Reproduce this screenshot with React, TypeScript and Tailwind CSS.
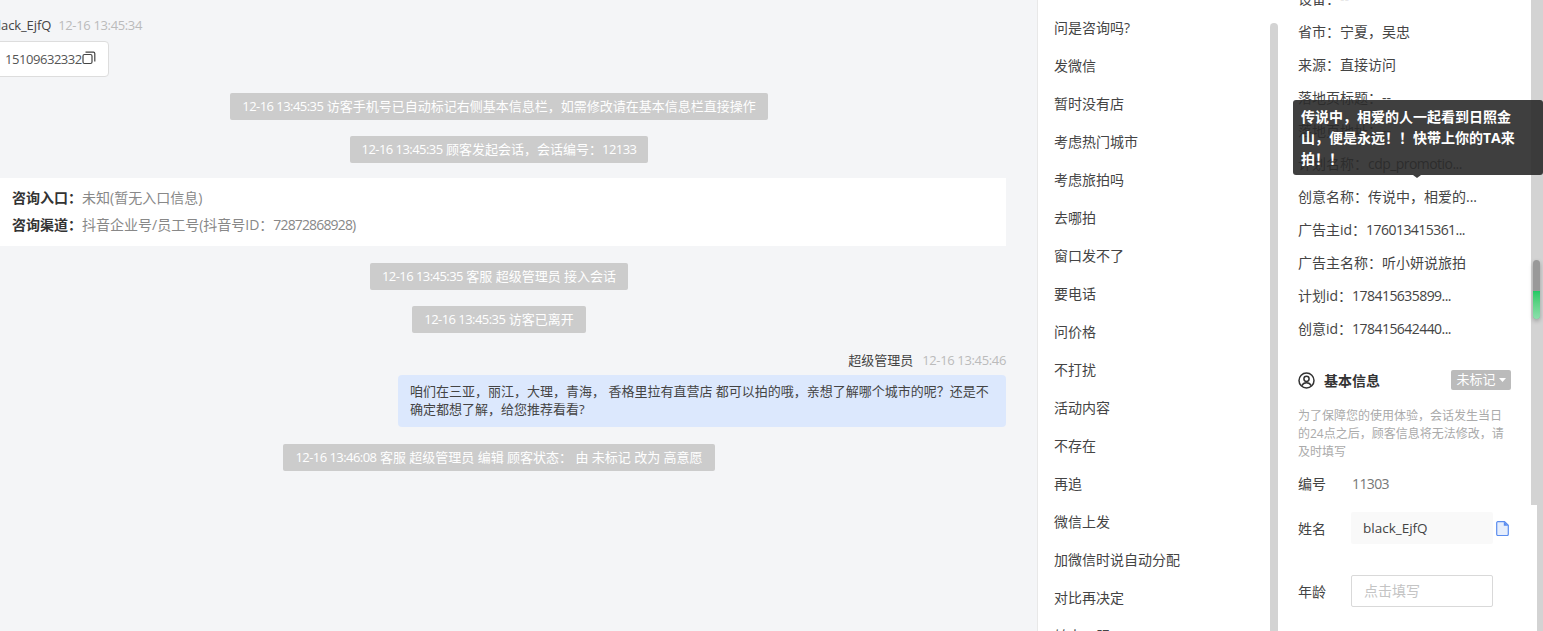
import React from "react";

const font = { fontFamily: '"Open Sans","Noto Sans CJK SC",sans-serif' };

function N({ children }: { children: React.ReactNode }) {
  return <span className="tracking-[-0.55px]">{children}</span>;
}

function Sys({ time, children, mt }: { time: string; children: React.ReactNode; mt: string }) {
  return (
    <div className={`flex justify-center pr-[8px] ${mt}`}>
      <div className="h-[27px] rounded-[2px] bg-[#cccccc] px-3 text-[13px] leading-[27px] text-white whitespace-nowrap">
        <N>{time}</N> {children}
      </div>
    </div>
  );
}

const replies = ["问是咨询吗?", "发微信", "暂时没有店", "考虑热门城市", "考虑旅拍吗", "去哪拍", "窗口发不了", "要电话", "问价格", "不打扰", "活动内容", "不存在", "再追", "微信上发", "加微信时说自动分配", "对比再决定", "转人工服"];

const infos: [string, string, boolean][] = [
  ["省市：", "宁夏，吴忠", false],
  ["来源：", "直接访问", false],
  ["落地页标题：", "--", false],
  ["落地页地址：", "--", false],
  ["计划名称：", "cdp_promotio...", true],
  ["创意名称：", "传说中，相爱的...", false],
  ["广告主id：", "176013415361...", true],
  ["广告主名称：", "听小妍说旅拍", false],
  ["计划id：", "178415635899...", true],
  ["创意id：", "178415642440...", true],
];

export default function App() {
  return (
    <div style={font} className="flex h-[631px] w-[1543px] overflow-hidden bg-[#f4f5f7] text-[14px] text-[#444444]">
      {/* chat */}
      <div className="w-[1037px] shrink-0 pr-[31px]">
        <div className="-ml-[10px] pt-[16px]">
          <div className="flex items-center gap-[7px] text-[13px] leading-[18px]">
            <span className="tracking-[-0.1px]">black_EjfQ</span>
            <span className="tracking-[-0.35px] text-[#bbbbbb]">12-16 13:45:34</span>
          </div>
          <div className="mt-[7px] flex h-[36px] w-[119px] items-center rounded-[4px] border border-[#dddddd] bg-white pl-[14px] text-[13px] text-[#555555]">
            <span className="mt-[1px] tracking-[-0.45px]">15109632332</span>
            <svg width="14" height="14" viewBox="0 0 14 14" fill="none" stroke="#444" strokeWidth="1.2" className="-mt-[2px]">
              <rect x="1" y="3.500" width="9" height="9" rx="1.500" />
              <path d="M3.500 1.200h8a1.500 1.500 0 0 1 1.300 1.300v8" />
            </svg>
          </div>
        </div>
        <Sys mt="mt-[16px]" time="12-16 13:45:35">访客手机号已自动标记右侧基本信息栏，如需修改请在基本信息栏直接操作</Sys>
        <Sys mt="mt-[16px]" time="12-16 13:45:35">顾客发起会话，会话编号：<N>12133</N></Sys>
        <div className="mt-[15px] h-[68px] bg-white pl-[12px] pt-[6px] text-[14px] leading-[27px]">
          <div><b className="font-bold text-[#333333]">咨询入口：</b><span className="text-[#888888]">未知(暂无入口信息)</span></div>
          <div><b className="font-bold text-[#333333]">咨询渠道：</b><span className="text-[#888888]">抖音企业号/员工号(抖音号ID：<span className="tracking-[-0.85px]">72872868928)</span></span></div>
        </div>
        <Sys mt="mt-[17px]" time="12-16 13:45:35">客服 超级管理员 接入会话</Sys>
        <Sys mt="mt-[16px]" time="12-16 13:45:35">访客已离开</Sys>
        <div className="mt-[18px] flex justify-end gap-[9px] text-[13px] leading-[18px]">
          <span>超级管理员</span>
          <span className="tracking-[-0.35px] text-[#bbbbbb]">12-16 13:45:46</span>
        </div>
        <div className="mt-[6px] flex justify-end">
          <div className="w-[608px] rounded-[4px] bg-[#dce8fd] px-3 pb-[9px] pt-[7px] text-[13px] leading-[18px] text-[#444444]">
            咱们在三亚，丽江，大理，青海， 香格里拉有直营店 都可以拍的哦，亲想了解哪个城市的呢？还是不确定都想了解，给您推荐看看?
          </div>
        </div>
        <Sys mt="mt-[17px]" time="12-16 13:46:08">客服 超级管理员 编辑 顾客状态： 由 未标记 改为 高意愿</Sys>
      </div>

      {/* quick replies */}
      <div className="flex w-[241px] shrink-0 border-l border-[#e8e8e8] bg-white">
        <div className="w-[232px] shrink-0 pl-[16px] pt-[9px]">
          {replies.map((r) => (
            <div key={r} className="h-[38px] whitespace-nowrap leading-[38px]">{r}</div>
          ))}
        </div>
        <div className="mt-[23px] w-[8px] shrink-0 rounded-t-[4px] bg-[#d3d3d3]" />
      </div>

      {/* info */}
      <div className="relative w-[265px] shrink-0 bg-white">
        <div className="w-[253px] pl-[20px]">
          <div className="-mt-[12px] h-[33px] leading-[22px]">设备：--</div>
          {infos.map(([k, v, num]) => (
            <div key={k} className="h-[33px] whitespace-nowrap leading-[22px]">{k}{num ? <N>{v}</N> : v}</div>
          ))}
          <div className="mt-[19px] flex h-[20px] items-center">
            <svg width="17" height="17" viewBox="0 0 17 17" fill="none" stroke="#333" strokeWidth="1.500">
              <circle cx="8.500" cy="8.500" r="7.500" />
              <circle cx="8.500" cy="6.800" r="2.600" />
              <path d="M3.800 13.800c1-2.200 2.700-3 4.700-3s3.700.8 4.700 3" />
            </svg>
            <b className="ml-[9px] text-[#333333]">基本信息</b>
            <div className="ml-[71px] flex h-[20px] w-[60px] items-center justify-center rounded-[2px] bg-[#bbbbbb] text-[13px] text-white">
              未标记
              <svg width="7" height="4" viewBox="0 0 7 4" fill="#fff" className="ml-[3px]"><path d="M0 0h7L3.500 4z" /></svg>
            </div>
          </div>
          <p className="mt-[17px] w-[212px] text-[12px] leading-[18px] text-[#aaaaaa]">为了保障您的使用体验，会话发生当日的24点之后，顾客信息将无法修改，请及时填写</p>
          <div className="mt-[11px] flex h-[22px] items-center">
            <span className="w-[54px]">编号</span><span className="tracking-[-0.6px] text-[#777777]">11303</span>
          </div>
          <div className="mt-[18px] flex items-center">
            <span className="w-[53px]">姓名</span>
            <div className="h-[32px] w-[142px] rounded-[2px] bg-[#f9f9f9] pl-[12px] text-[13.500px] leading-[32px]">black_EjfQ</div>
            <svg width="13" height="15" viewBox="0 0 13 15" fill="none" className="ml-[3px]">
              <path d="M1.500.7h7l3.800 3.600v8.900a1.300 1.300 0 0 1-1.300 1.300H1.500A1.300 1.300 0 0 1 .7 13.200V1.700A1.300 1.300 0 0 1 1.500.7z" fill="#e6eefc" stroke="#5b8def" strokeWidth="1.200" />
              <path d="M7.800 .8v3.900h4.400z" fill="#5b8def" />
            </svg>
          </div>
          <div className="mt-[31px] flex items-center">
            <span className="w-[53px]">年龄</span>
            <div className="h-[32px] w-[142px] rounded-[2px] border border-[#d9d9d9] pl-[12px] leading-[30px] text-[#c4c4c4]">点击填写</div>
          </div>
        </div>
        {/* page scrollbar */}
        <div className="absolute right-0 top-0 h-[505px] w-[12px] bg-[#d3d3d3]" />
        <div className="absolute right-0 top-[505px] h-[126px] w-[6px] bg-[#d3d3d3]" />
        <div className="absolute right-[3px] top-[260px] h-[59px] w-[7px] rounded-[4px] bg-[#999999] shadow-[0_2px_4px_rgba(0,0,0,0.25)]" />
        <div className="absolute right-[3px] top-[291px] h-[28px] w-[7px] rounded-b-[4px] bg-gradient-to-b from-[#1fc964] to-[#8ce0ad]" />
        {/* tooltip */}
        <div className="absolute left-[15px] top-[100px] h-[75px] w-[250px] rounded-[3px] bg-[#2a2a2a]/90 pl-[8px] pr-[26px] pt-[6px] text-[14px] font-bold leading-[21px] text-white">
          传说中，相爱的人一起看到日照金山，便是永远！！快带上你的TA来拍！！
          <div className="absolute -bottom-[3px] left-[120px] h-0 w-0 border-x-[4px] border-t-[3px] border-x-transparent border-t-[#3d3d3d]" />
        </div>
      </div>
    </div>
  );
}
